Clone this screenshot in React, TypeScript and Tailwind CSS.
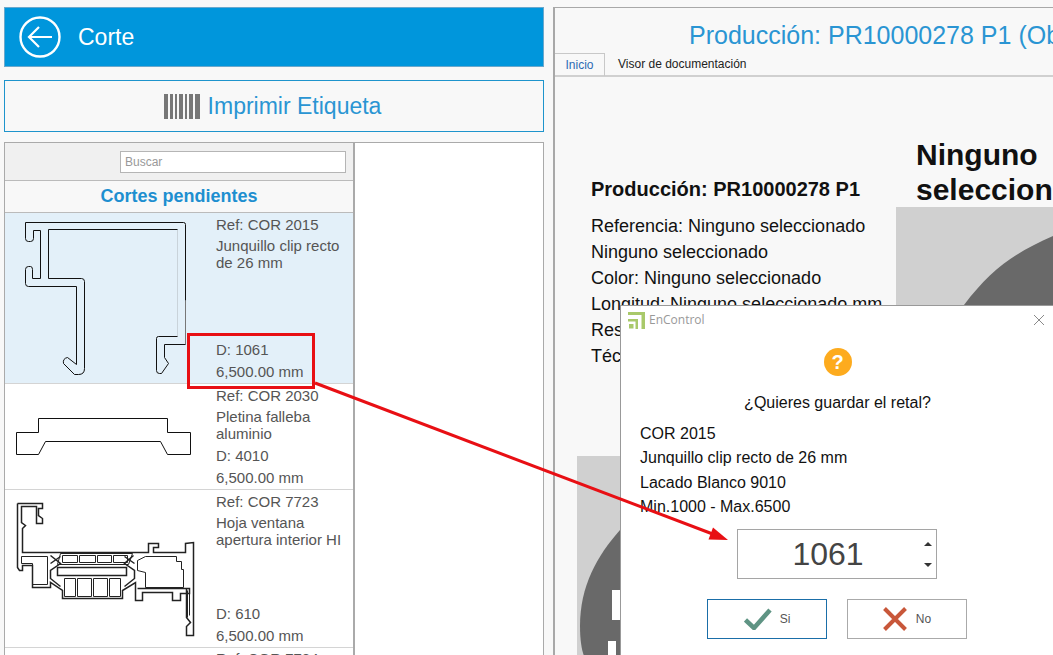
import { ReactNode } from "react";

type Corte = { ref: string; name: ReactNode; d: string; h: string; bg?: string; top: number; height: number; profile: ReactNode };

const cortes: Corte[] = [
  {
    ref: "COR 2015",
    name: <>Junquillo clip recto<br />de 26 mm</>,
    d: "1061",
    h: "h-[171px]",
    bg: "bg-[#e3f0f9]",
    top: 213,
    height: 170,
    profile: (
      <>
        <path d="M177 229V336" stroke="#c9d3da" />
        <path d="M185 300V344" stroke="#777" />
        <path
          d="M25 222H183Q185 222 185 224V300M48 229H177M48 229V278H81Q84 278 84 281V368Q84 374 78 374H74L63 363Q62 358 67 357L76 364V286H28Q25 286 25 283V269Q25 266 28 266H30Q32 266 32 269V278H40V230H33V238Q33 241 30 241H28Q25 241 25 238V222M177 336H158Q156 336 156 338V370Q156 373 159 373H161L168 363L164 357V344H185"
          stroke="#111"
          fill="none"
        />
      </>
    ),
  },
  {
    ref: "COR 2030",
    name: <>Pletina falleba<br />aluminio</>,
    d: "4010",
    h: "h-[106px]",
    top: 384,
    height: 105,
    profile: <path d="M16 432H38V418H167V432H190V454H167L160 441H45L38 454H16Z" stroke="#111" fill="none" />,
  },
  {
    ref: "COR 7723",
    name: <>Hoja ventana<br />apertura interior HI</>,
    d: "610",
    h: "h-[158px]",
    top: 490,
    height: 157,
    profile: (
      <g stroke="#222" fill="none">
        <path
          strokeWidth="1.5"
          d="M17 503H42V508H38V515L42 518V523H36V506H21V522L25 525L22 528V552H148V543H158V547H153V552H185V543L193 542V635H186V626L190 622L186 617V588"
        />
        <path strokeWidth="1.5" d="M17 503V567L19 570H22V565H32V587H50V582L62 590V598H122V590L135 582V600H142V592H172V600H180V593H189V588H137" />
        <path d="M21 556H47V584H32V563H21ZM145 556H176V561H181V569H183V587H145V572L137 570V560Z" />
        <path d="M60 553H132L128 564H57ZM62 555H77V562H62ZM79 555H95V562H79ZM97 555H111V562H97ZM113 555H127V562H113Z" />
        <path strokeWidth="1.5" d="M57 567H126V575H57Z" />
        <path d="M64 578H75V596H64ZM77 578H91V596H77ZM93 578H107V596H93ZM109 578H120V596H109Z" />
        <path strokeWidth="1.5" d="M50 555L60 563L50 570V578L60 586M133 555L124 563L134 570V578L124 586M60 556L50 563M124 556L134 563" />
        <path d="M189 592V615M187 617V590" />
      </g>
    ),
  },
];

function CorteRow({ corte }: { corte: Corte }) {
  return (
    <div className={`flex ${corte.h} border-b border-[#d4d4d4] ${corte.bg ?? "bg-white"}`}>
      <svg className="w-[211px] shrink-0" viewBox={`5 ${corte.top} 211 ${corte.height}`}>
        <g transform="translate(0.5 0.5)">{corte.profile}</g>
      </svg>
      <div className="flex flex-col justify-between pb-[1px] text-[15px] text-[#555]">
        <div>
          <div className="h-[21px] leading-[23px]">Ref: {corte.ref}</div>
          <div className="mt-[3px] leading-[17px]">{corte.name}</div>
        </div>
        <div>
          <div className="h-[21px] leading-[19px]">D: {corte.d}</div>
          <div className="h-[21px] leading-[21px]">6,500.00 mm</div>
        </div>
      </div>
    </div>
  );
}

function LeftColumn() {
  return (
    <div className="flex w-[540px] shrink-0 flex-col">
      <div className="flex h-[60px] shrink-0 items-center border border-[#6aa8cc] bg-[#0096dc] pl-[14px] text-white">
        <svg width="42" height="42" viewBox="0 0 42 42" fill="none" stroke="white" strokeWidth="2.4">
          <circle cx="21" cy="21" r="19.5" />
          <path d="M33 21H11M20 11L10 21L20 31" strokeWidth="2.2" />
        </svg>
        <span className="ml-[17px] text-[23px]">Corte</span>
      </div>

      <div className="mt-[13px] flex h-[52px] shrink-0 items-center justify-center gap-[8px] border border-[#1e94cc] pr-[3px] text-[23px] text-[#2a95d3]">
        <svg width="36" height="25" viewBox="0 0 36 25" fill="#777">
          <path d="M0 0H4V25H0ZM6 0H9V25H6ZM11 0H13V25H11ZM15 0H19V25H15ZM21 0H23V25H21ZM25 0H29V25H25ZM31 0H36V25H31Z" />
        </svg>
        <span>Imprimir Etiqueta</span>
      </div>

      <div className="mt-[10px] flex h-[600px] shrink-0 border border-[#aaa] bg-white">
        <div className="w-[350px] shrink-0 border-r-2 border-[#aaa]">
          <div className="flex h-[38px] items-center justify-end border-b border-[#bbb] bg-[#f0f0f0] pr-[7px]">
            <div className="flex h-[22px] w-[226px] items-center border border-[#b5b5b5] bg-white pl-[4px] text-[12px] text-[#999]">Buscar</div>
          </div>
          <div className="flex h-[32px] items-center justify-center border-b border-[#bbb] bg-[#f8f8f8] text-[18px] font-bold text-[#1e8fd0]">
            Cortes pendientes
          </div>
          {cortes.map((c) => (
            <CorteRow key={c.ref} corte={c} />
          ))}
          <div className="pl-[211px] text-[15px] leading-[21px] text-[#555]">Ref: COR 7724</div>
        </div>
      </div>
    </div>
  );
}

function Placeholder({ className, d, children }: { className: string; d: string; children?: ReactNode }) {
  return (
    <div className={`overflow-hidden bg-[#d0d0d0] ${className}`}>
      <svg className="h-full w-full" fill="#696969">
        <path d={d} />
        {children}
      </svg>
    </div>
  );
}

function RightPanel() {
  return (
    <div className="ml-[9px] flex min-w-0 flex-1 flex-col border-l-2 border-t border-[#a8a8a8]">
      <div className="h-[45px] shrink-0 overflow-hidden whitespace-nowrap pl-[134px] pt-[11px] text-[25px] leading-[32px] text-[#2a95d3]">
        Producción: PR10000278 P1 (Obra 1)
      </div>
      <div className="flex h-[24px] shrink-0 border-b-2 border-[#d0d0d0] text-[12px]">
        <div className="flex h-[23px] w-[50px] items-center justify-center border-r border-t border-[#c8c8c8] text-[#2d6bb5]">Inicio</div>
        <div className="ml-[13px] flex items-center text-[#222]">Visor de documentación</div>
      </div>
      <div className="flex flex-1">
        <div className="w-[341px] shrink-0 pl-[22px]">
          <div className="pl-[14px] pt-[99px] text-[18px] leading-[26px] text-[#111]">
            <div className="mb-[11px] text-[20px] font-bold">Producción: PR10000278 P1</div>
            <div>Referencia: Ninguno seleccionado</div>
            <div>Ninguno seleccionado</div>
            <div>Color: Ninguno seleccionado</div>
            <div className="whitespace-nowrap">Longitud: Ninguno seleccionado mm</div>
            <div>Resto: Ninguno</div>
            <div>Técnico: Ninguno</div>
          </div>
          <Placeholder className="mt-[87px] h-[200px] w-[60px]" d="M43 74C20 100 3 130 3 170C3 185 5 195 7 200H60V60Z">
            <rect x="35" y="134" width="25" height="30" fill="white" />
            <rect x="31" y="185" width="8" height="15" fill="white" />
          </Placeholder>
        </div>
        <div className="min-w-0 flex-1 overflow-hidden pt-[60px]">
          <div className="whitespace-nowrap pl-[20px] text-[30px] font-bold leading-[35px] text-[#111]">
            Ninguno
            <br />
            seleccionado
          </div>
          <Placeholder className="h-[400px] w-full" d="M68 98C95 62 120 45 157 29V400H0V98Z" />
        </div>
      </div>
    </div>
  );
}

function Dialog() {
  return (
    <div className="absolute left-[620px] top-[305px] h-[350px] w-[434px] border-l border-t border-[#999] bg-white text-[#111]">
      <div className="flex h-[28px] items-center pl-[7px] pr-[9px]">
        <svg width="17" height="17" viewBox="0 0 17 17" fill="#a9c96a">
          <path d="M0 0H17V17H13.5V3H0ZM0 7H10V17H7.5V9.5H0ZM1 12H5.5V16.5H1Z" />
        </svg>
        <span className="ml-[4px] font-['Open_Sans',sans-serif] text-[12px] text-[#999]">EnControl</span>
        <svg className="ml-auto" width="12" height="12" viewBox="0 0 12 12" stroke="#8a8a8a">
          <path d="M1 1L11 11M11 1L1 11" />
        </svg>
      </div>

      <div className="mx-auto mt-[14px] flex h-[28px] w-[28px] items-center justify-center rounded-full bg-[#fdab1e] text-[20px] font-bold text-white">?</div>
      <p className="mt-[15px] text-center text-[16px] leading-[24px]">¿Quieres guardar el retal?</p>

      <div className="mt-[7px] pl-[19px] text-[16px] leading-[24.4px]">
        <div>COR 2015</div>
        <div>Junquillo clip recto de 26 mm</div>
        <div>Lacado Blanco 9010</div>
        <div>Min.1000 - Max.6500</div>
      </div>

      <div className="relative ml-[116px] mt-[9px] flex h-[50px] w-[200px] items-center justify-center border border-[#a5a5a5] pr-[18px] text-[32px] text-[#444]">
        1061
        <svg className="absolute right-[4px] top-[10px]" width="8" height="30" viewBox="0 0 8 30" fill="#333">
          <path d="M0 6L4 2L8 6ZM0 23H8L4 27Z" />
        </svg>
      </div>

      <div className="ml-[86px] mt-[20px] flex gap-[20px] text-[12px] text-[#555]">
        <button className="flex h-[40px] w-[120px] items-center justify-center gap-[8px] border border-[#1a6ea8]">
          <svg width="28" height="22" viewBox="0 0 28 22" fill="none" stroke="#5f9484" strokeWidth="4.5">
            <path d="M1.5 12L10 20L26 2" />
          </svg>
          Si
        </button>
        <button className="flex h-[40px] w-[120px] items-center justify-center gap-[9px] border border-[#aaa]">
          <svg width="24" height="24" viewBox="0 0 24 24" fill="none" stroke="#c8573a" strokeWidth="4">
            <path d="M1.5 1.5L22.5 22.5M22.5 1.5L1.5 22.5" />
          </svg>
          No
        </button>
      </div>
    </div>
  );
}

export default function App() {
  return (
    <div className="relative flex h-[655px] w-[1053px] overflow-hidden bg-[#f8f8f8] pl-[4px] pt-[7px] font-['Liberation_Sans',sans-serif]">
      <LeftColumn />
      <RightPanel />
      <Dialog />

      {/* marca roja de la captura */}
      <div className="absolute left-[187px] top-[333px] h-[56px] w-[128px] border-[3px] border-[#e80f14]" />
      <svg className="pointer-events-none absolute left-0 top-0" width="1053" height="655">
        <path d="M315 383L714 534.5" stroke="#e80f14" strokeWidth="3" />
        <path d="M728 540L713 527.5L708.5 539.5Z" fill="#e80f14" />
      </svg>
    </div>
  );
}
